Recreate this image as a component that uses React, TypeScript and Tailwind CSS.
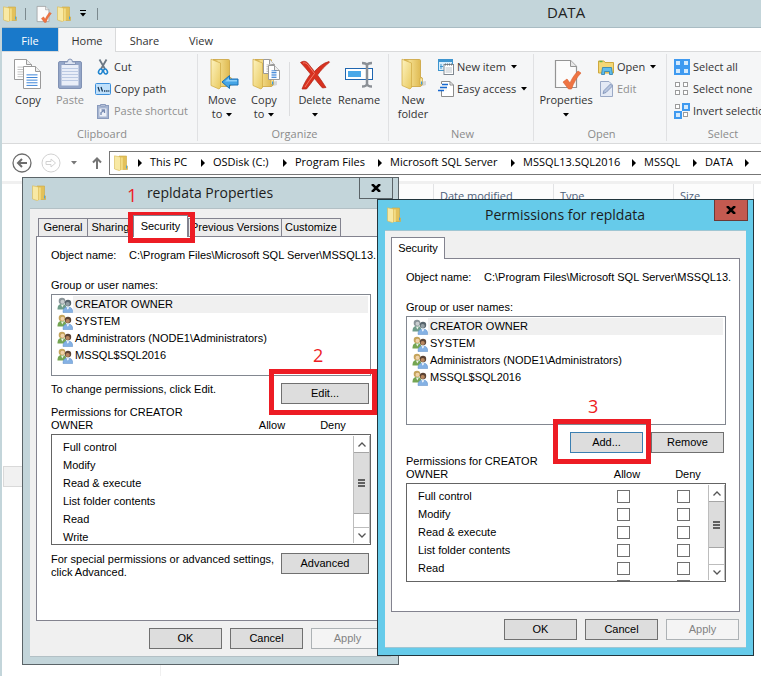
import type { ReactNode } from "react";

const UI = "font-['Open_Sans','Noto_Sans',sans-serif]";
const CLASSIC = "font-['Liberation_Sans',Arial,sans-serif]";

/* ---------- icons ---------- */

function Folder({ className = "h-8 w-8" }: { className?: string }) {
  return (
    <svg viewBox="0 0 32 32" className={className} aria-hidden="true">
      <defs>
        <linearGradient id="folderFront" x1="0" y1="0" x2="1" y2="1">
          <stop offset="0" stopColor="#fdf3c0" />
          <stop offset="1" stopColor="#e9c95e" />
        </linearGradient>
        <linearGradient id="folderBack" x1="0" y1="0" x2="1" y2="0">
          <stop offset="0" stopColor="#c99f35" />
          <stop offset="0.3" stopColor="#f4de8e" />
          <stop offset="1" stopColor="#dcb54a" />
        </linearGradient>
      </defs>
      <path d="M22 29l7-2v-4l-6 1z" fill="#9a9a9a" opacity=".35" />
      <path d="M7 1.500h15.500a1 1 0 0 1 1 1V19l1.500 1v7l-1.500 1.500H13z" fill="url(#folderBack)" stroke="#caa23c" strokeWidth=".8" />
      <path d="M5 1.200L14.500 5v24.500L13 31 5 27.500z" fill="url(#folderFront)" stroke="#d3ae4a" strokeWidth=".8" />
      <path d="M23 20h2.500v6.500H23z" fill="#f7e7a6" stroke="#c9a33c" strokeWidth=".6" />
      <path d="M24 23.500h1.200v3H24z" fill="#3b9be0" />
    </svg>
  );
}

function SmallFolder({ className = "h-4 w-4" }: { className?: string }) {
  return (
    <svg viewBox="0 0 16 16" className={className} aria-hidden="true">
      <path d="M6 1h7.500v9.500l1 .5v3.500H6z" fill="#e3c15a" stroke="#cfa740" strokeWidth=".6" />
      <path d="M1.500.8L7.500 2v13l-.8.7-5.200-1.700z" fill="#f8e9a4" stroke="#d9b954" strokeWidth=".6" />
      <path d="M7.800 2.500h2v12.500h-2z" fill="#f3dc85" />
      <path d="M13 10.500h1v3h-1z" fill="#4ba3dd" />
    </svg>
  );
}

function Page({ x, y, w, h, lines }: { x: number; y: number; w: number; h: number; lines?: string }) {
  const rows = [0.38, 0.5, 0.62, 0.74, 0.86];
  return (
    <g>
      <path d={`M${x} ${y}h${w - 5}l5 5v${h - 5}h${-w}z`} fill="#fff" stroke="#9a9a9a" />
      <path d={`M${x + w - 5} ${y}v5h5`} fill="#eee" stroke="#9a9a9a" />
      {lines && rows.map((r) => <path key={r} d={`M${x + 3} ${y + h * r}h${w - 6}`} stroke={lines} />)}
    </g>
  );
}

function CopyIcon() {
  return (
    <svg viewBox="0 0 32 32" className="h-8 w-8" aria-hidden="true">
      <Page x={2.5} y={1.5} w={17} h={20} lines="#c4c4c4" />
      <Page x={11.5} y={8.5} w={17} h={22} lines="#3f86d8" />
    </svg>
  );
}

function PasteIcon() {
  return (
    <svg viewBox="0 0 32 32" className="h-8 w-8" aria-hidden="true">
      <rect x="4.500" y="3.500" width="23" height="27" rx="1.500" fill="#94a6c8" stroke="#8192b4" />
      <rect x="7.500" y="7" width="17" height="20.500" fill="#e9eef8" />
      <path d="M7.500 10.500h17M7.500 13.500h17M7.500 16.500h17M7.500 19.500h17M7.500 22.500h17" stroke="#bccae3" />
      <path d="M10.500 6.500V4h3q0-3 2.500-3t2.500 3h3v2.500z" fill="#dde4f1" stroke="#8797b8" />
    </svg>
  );
}

function CutIcon() {
  return (
    <svg viewBox="0 0 16 16" className="h-4 w-4" fill="none" aria-hidden="true">
      <path d="M4.500 0.500L10 10M11.500 0.500L6 10" stroke="#6b7885" strokeWidth="1.800" />
      <ellipse cx="5.500" cy="12.500" rx="1.800" ry="2.500" stroke="#1e84cf" strokeWidth="1.600" transform="rotate(25 5.500 12.500)" />
      <ellipse cx="10.500" cy="12.500" rx="1.800" ry="2.500" stroke="#1e84cf" strokeWidth="1.600" transform="rotate(-25 10.500 12.500)" />
    </svg>
  );
}

function CopyPathIcon() {
  return (
    <svg viewBox="0 0 16 16" className="h-4 w-4" aria-hidden="true">
      <rect x=".5" y="2.500" width="15" height="11" rx="1" fill="#bfe0fb" stroke="#3c8fdc" />
      <path d="M3 6l1.500 4.500M6 6l1.500 4.500" stroke="#12304f" strokeWidth="1.200" />
      <path d="M9 10h1.300M11.200 10h1.300M13.300 10h1" stroke="#12304f" strokeWidth="1.300" />
    </svg>
  );
}

function PasteShortcutIcon() {
  return (
    <svg viewBox="0 0 16 16" className="h-4 w-4" aria-hidden="true">
      <rect x="2.500" y="2.500" width="11" height="13" fill="#a6b5d1" stroke="#8a9bbd" />
      <path d="M5.500 3V1.500h5V3z" fill="#dfe6f2" stroke="#8a9bbd" />
      <rect x="4.500" y="5.500" width="7" height="8" fill="#eef2f9" />
      <path d="M6 12V9.500l3-2M6.500 7h3v3" fill="none" stroke="#7589b1" strokeWidth="1.300" />
    </svg>
  );
}

function MoveIcon() {
  return (
    <div className="relative h-8 w-8">
      <Folder />
      <svg viewBox="0 0 18 16" className="absolute right-[-1px] bottom-0 h-4 w-[18px]" aria-hidden="true">
        <path d="M1 8l7.500-6.500V5H17v6H8.500v3.500z" fill="#45a5e6" stroke="#1c71b5" />
        <path d="M4 7.500l4-3.500v2h8v1.500z" fill="#8fd0f7" />
      </svg>
    </div>
  );
}

function CopyToIcon() {
  return (
    <div className="relative h-8 w-8">
      <Folder />
      <svg viewBox="0 0 20 24" className="absolute top-0 right-[-1px] h-6 w-5" aria-hidden="true">
        <Page x={2.5} y={1.5} w={11} h={14} lines="#c4c4c4" />
        <Page x={7.5} y={7.5} w={11} h={14} lines="#4b8edb" />
      </svg>
    </div>
  );
}

function DeleteIcon() {
  return (
    <svg viewBox="0 0 32 32" className="h-8 w-8" aria-hidden="true">
      <path d="M1.500 4.500c3-2 6-1.500 8 1.500l6 7.500C19.500 9 24 5 30 3.500l.5.800C26 8 22 12 18.500 17c3 4 5.500 8 8.500 12.500l-3.500.5C20.500 27 18 23.500 15.500 20.500 12.500 24.500 10 28 7.500 31H3c2-5.500 5-10.500 8.500-15C8 12 5 8 1.500 4.500z" fill="#d8311f" stroke="#b02214" strokeWidth=".7" />
      <path d="M4 5c2-.8 4 .5 5.500 2.500l6 8C12 20 9 24.500 6 29" fill="none" stroke="#f1806f" strokeWidth=".9" />
    </svg>
  );
}

function RenameIcon() {
  return (
    <svg viewBox="0 0 32 32" className="h-8 w-8" fill="none" aria-hidden="true">
      <rect x="2.500" y="10.500" width="27" height="11" fill="#fff" stroke="#1f66b0" />
      <rect x="5" y="13" width="13" height="6" fill="#4aa8e8" />
      <path d="M19 5c3 0 4.500.5 5 2.500.500-2 2-2.500 5-2.500M24 7v19M19 28.500c3 0 4.500-.5 5-2.500.500 2 2 2.500 5 2.500" stroke="#8b9096" strokeWidth="2.500" />
    </svg>
  );
}

function NewItemIcon() {
  return (
    <svg viewBox="0 0 16 16" className="h-4 w-4" aria-hidden="true">
      <rect x=".5" y=".5" width="14" height="11" fill="#d9effd" stroke="#3e95cf" />
      <path d="M1 2h13" stroke="#3e95cf" strokeWidth="2" />
      <path d="M3 5v5M2 7.500h3" stroke="#3e95cf" />
      <rect x="6" y="5.500" width="9.500" height="10" fill="#fff" stroke="#808890" />
      <path d="M7 5.500h8" stroke="#707880" strokeWidth="2" strokeDasharray="1 1" />
      <path d="M7.500 9h6.500M7.500 11h6.500M7.500 13h6.500" stroke="#aab2ba" strokeWidth=".8" />
    </svg>
  );
}

function EasyAccessIcon() {
  return (
    <svg viewBox="0 0 16 16" className="h-4 w-4" aria-hidden="true">
      <path d="M3.500.5H12l3.500 3.500v11.500h-12z" fill="#fff" stroke="#8c8c8c" />
      <path d="M12 .5V4h3.500" fill="none" stroke="#8c8c8c" />
      <rect x="0" y="3" width="9" height="7" fill="#f5f6f7" />
      <path d="M4 3.500h6M2 6.500h7M0 9.500h6" stroke="#1668d0" strokeWidth="1.400" />
    </svg>
  );
}

function PropertiesIcon({ className = "h-8 w-8" }: { className?: string }) {
  return (
    <svg viewBox="0 0 32 32" className={className} aria-hidden="true">
      <path d="M5.500 2.500h15l6 6v21h-21z" fill="#fbfbfb" stroke="#949494" strokeWidth="1.200" />
      <path d="M20.500 2.500v6h6" fill="#e8e8e8" stroke="#949494" />
      <path d="M13 24l4-3 3 4c2-5 5-9 8-12l3 2c-4 4-7.500 10-9.500 16h-3z" fill="#ee7443" stroke="#d85c2c" strokeWidth=".6" />
    </svg>
  );
}

function OpenIcon() {
  return (
    <svg viewBox="0 0 16 16" className="h-4 w-4" aria-hidden="true">
      <path d="M.5 2h5.500l1 1.500h8.500V14H.5z" fill="#f3d775" stroke="#cfa93f" />
      <path d="M1.500 2.500h3" stroke="#5fb446" strokeWidth="1.400" />
      <path d="M3.500 15.500L4.500 8.500h9l1 7h-3v-3h-5v3z" fill="#5fbcec" stroke="#277fb4" strokeWidth=".8" />
    </svg>
  );
}

function EditIcon() {
  return (
    <svg viewBox="0 0 16 16" className="h-4 w-4" aria-hidden="true">
      <path d="M2.500.5h8.500l3.500 3.500v11.500h-12z" fill="#e4eaf5" stroke="#9aa9c6" />
      <path d="M5 12.500l1-3L12.500 3l2 2L8 11.500z" fill="#b6c4de" stroke="#8093b8" strokeWidth=".9" />
    </svg>
  );
}

function SelectIcon({ cells }: { cells: boolean[] }) {
  return (
    <svg viewBox="0 0 16 16" className="h-4 w-4" aria-hidden="true">
      {cells.map((on, i) => {
        const x = (i % 2) * 8;
        const y = Math.floor(i / 2) * 8;
        return on ? (
          <g key={i}>
            <rect x={x} y={y} width="8" height="8" fill="#3f9af0" />
            <rect x={x + 2} y={y + 2} width="4" height="4" fill="#d4eafd" />
          </g>
        ) : (
          <rect key={i} x={x + 1.5} y={y + 1.5} width="4" height="4" fill="#fff" stroke="#9b9b9b" />
        );
      })}
    </svg>
  );
}

function UsersIcon({ muted }: { muted?: boolean }) {
  return (
    <svg viewBox="0 0 16 16" className="h-4 w-4 shrink-0" aria-hidden="true">
      <path d="M.5 12.500c0-4 1.500-5.500 4.500-5.500s4.500 1.500 4.500 5.500z" fill={muted ? "#6f9d8a" : "#74a552"} />
      <path d="M4 7.500l1.300 3L7 7.500z" fill="#eef2ea" />
      <circle cx="5" cy="4" r="3.300" fill={muted ? "#8a9499" : "#c5a45c"} />
      <circle cx="5.500" cy="4.700" r="2" fill={muted ? "#c9ced0" : "#f0d3ab"} />
      <path d="M6 15.500c0-4 1.500-5.500 4.800-5.500s4.900 1.500 4.900 5.500z" fill="#84b1e4" stroke="#5b8cc7" strokeWidth=".5" />
      <path d="M9.500 10.200l1.300 2.600 1.500-2.600z" fill="#fff" />
      <circle cx="11" cy="6" r="3.200" fill={muted ? "#56646c" : "#5b4334"} />
      <circle cx="10.700" cy="7" r="2.100" fill={muted ? "#94a0a5" : "#b98860"} />
    </svg>
  );
}

function Caret({ className = "" }: { className?: string }) {
  return (
    <svg viewBox="0 0 6 4" className={`inline-block h-1 w-1.5 align-middle ${className}`} aria-hidden="true">
      <path d="M0 0h6L3 3.500z" fill="currentColor" />
    </svg>
  );
}

/* ---------- explorer ribbon ---------- */

function BigButton({ icon, top, bottom, caret, width = "w-[42px]", muted }: { icon: ReactNode; top: string; bottom?: string; caret?: boolean; width?: string; muted?: boolean }) {
  return (
    <button className={`flex flex-col items-center pt-1.5 ${width} ${muted ? "text-[#8f8f8f]" : "text-[#333]"}`}>
      {icon}
      <span className="mt-[3px] text-center leading-[14px] whitespace-nowrap">
        {top}
        <br />
        {bottom}
        {caret && <Caret className={bottom ? "ml-1 text-black" : "text-black"} />}
      </span>
    </button>
  );
}

function SmallButton({ icon, label, caret, muted }: { icon: ReactNode; label: string; caret?: boolean; muted?: boolean }) {
  return (
    <button className={`flex h-[22px] items-center gap-[3px] whitespace-nowrap ${muted ? "text-[#8f8f8f]" : "text-[#333]"}`}>
      {icon}
      <span>{label}</span>
      {caret && <Caret className="ml-0.5 text-black" />}
    </button>
  );
}

function Group({ label, width, children }: { label: string; width: string; children: ReactNode }) {
  return (
    <section aria-label={label} className={`flex shrink-0 flex-col ${width}`}>
      <div className="flex h-[74px]">{children}</div>
      <div className="text-center leading-4 text-[#8b8b8b]">{label}</div>
    </section>
  );
}

const Sep = () => <div className="my-0.5 w-px shrink-0 bg-[#e0e1e3]" />;

function Ribbon() {
  return (
    <div className="flex h-[93px] overflow-hidden border-y border-[#d9dadb] bg-[#f5f6f7] text-[11px]">
      <Group label="Clipboard" width="w-[195px] pl-[5px]">
        <BigButton icon={<CopyIcon />} top="Copy" />
        <BigButton icon={<PasteIcon />} top="Paste" muted />
        <div className="pt-1 pl-1">
          <SmallButton icon={<CutIcon />} label="Cut" />
          <SmallButton icon={<CopyPathIcon />} label="Copy path" />
          <SmallButton icon={<PasteShortcutIcon />} label="Paste shortcut" muted />
        </div>
      </Group>
      <Sep />
      <Group label="Organize" width="w-[190px] pl-[3px]">
        <BigButton icon={<MoveIcon />} top="Move" bottom="to" caret />
        <BigButton icon={<CopyToIcon />} top="Copy" bottom="to" caret />
        <div className="mx-1 my-2.5 w-px bg-[#dcdddf]" />
        <BigButton icon={<DeleteIcon />} top="Delete" caret />
        <BigButton icon={<RenameIcon />} top="Rename" width="w-[46px]" />
      </Group>
      <Sep />
      <Group label="New" width="w-[144px] pl-[3px]">
        <BigButton icon={<Folder />} top="New" bottom="folder" />
        <div className="pt-1 pl-1">
          <SmallButton icon={<NewItemIcon />} label="New item" caret />
          <SmallButton icon={<EasyAccessIcon />} label="Easy access" caret />
        </div>
      </Group>
      <Sep />
      <Group label="Open" width="w-[132px] pl-[3px]">
        <BigButton icon={<PropertiesIcon />} top="Properties" caret width="w-[58px]" />
        <div className="pt-1 pl-[3px]">
          <SmallButton icon={<OpenIcon />} label="Open" caret />
          <SmallButton icon={<EditIcon />} label="Edit" muted />
        </div>
      </Group>
      <Sep />
      <Group label="Select" width="w-[112px]">
        <div className="pt-1 pl-[7px]">
          <SmallButton icon={<SelectIcon cells={[true, true, true, true]} />} label="Select all" />
          <SmallButton icon={<SelectIcon cells={[false, false, false, false]} />} label="Select none" />
          <SmallButton icon={<SelectIcon cells={[false, true, true, false]} />} label="Invert selection" />
        </div>
      </Group>
    </div>
  );
}

const crumbs = [
  { name: "This PC", width: "w-[63px]" },
  { name: "OSDisk (C:)", width: "w-[82px]" },
  { name: "Program Files", width: "w-[95px]" },
  { name: "Microsoft SQL Server", width: "w-[133px]" },
  { name: "MSSQL13.SQL2016", width: "w-[121px]" },
  { name: "MSSQL", width: "w-[61px]" },
  { name: "DATA", width: "w-[52px]" },
];

const Chevron = () => (
  <svg viewBox="0 0 4 8" className="h-2 w-1 shrink-0" aria-hidden="true">
    <path d="M0 0l4 4-4 4z" fill="#000" />
  </svg>
);

function AddressBar() {
  return (
    <div className="flex h-[37px] items-center pl-2.5">
      <button aria-label="Back">
        <svg viewBox="0 0 20 20" className="h-5 w-5" fill="none" stroke="#6d6d6d">
          <circle cx="10" cy="10" r="9" strokeWidth="1.300" />
          <path d="M15 10H6M10 6l-4 4 4 4" strokeWidth="2" />
        </svg>
      </button>
      <button aria-label="Forward" className="ml-[9px]">
        <svg viewBox="0 0 20 20" className="h-5 w-5" fill="none" stroke="#d2d2d2">
          <circle cx="10" cy="10" r="9" />
          <path d="M5 8.500h5V6l4.500 4-4.500 4v-2.500H5z" />
        </svg>
      </button>
      <button aria-label="Recent locations" className="ml-2.5 flex text-[#777]">
        <Caret />
      </button>
      <button aria-label="Up" className="ml-3.5">
        <svg viewBox="0 0 12 12" className="h-3 w-3" fill="none" stroke="#757575" strokeWidth="2">
          <path d="M6 12V2M2 5.500l4-4 4 4" />
        </svg>
      </button>
      <nav aria-label="Address" className="ml-1.5 flex h-6 flex-1 items-center overflow-hidden border border-r-0 border-[#777] bg-white pl-[3px] text-[11px] text-black">
        <SmallFolder className="mr-[9px] h-4 w-4" />
        <Chevron />
        {crumbs.map((c) => (
          <a key={c.name} href="#" className={`flex shrink-0 items-center justify-between pl-2 whitespace-nowrap ${c.width}`}>
            {c.name}
            <Chevron />
          </a>
        ))}
      </nav>
    </div>
  );
}

function Explorer() {
  return (
    <main className={`flex min-h-screen flex-col border-l-2 border-[#c3d5da] bg-white ${UI}`}>
      <header className="flex h-7 items-center border-b border-[#a9bcc3] bg-[#c3d5da]">
        <SmallFolder />
        <div className="ml-[7px] h-3 w-px bg-[#7b898e]" />
        <button aria-label="Properties" className="ml-2"><PropertiesIcon className="h-[18px] w-[18px]" /></button>
        <button aria-label="New folder" className="ml-1"><SmallFolder /></button>
        <button aria-label="Customize toolbar" className="ml-2 flex flex-col items-center gap-0.5">
          <span className="h-px w-1.5 bg-black" />
          <Caret />
        </button>
        <div className="ml-[11px] h-3 w-px bg-[#7b898e]" />
        <h1 className="ml-[449px] pb-0.5 text-[15px] text-[#222]">DATA</h1>
      </header>
      <div className="flex h-[23px] text-[11px] leading-[25px] text-[#333]">
        <button className="w-14 bg-[#1979ca] text-white">File</button>
        <button className="z-10 mb-[-1px] w-[58px] border-x border-[#d9dadb] bg-[#f5f6f7]">Home</button>
        <button className="w-[57px]">Share</button>
        <button className="w-14">View</button>
      </div>
      <Ribbon />
      <AddressBar />
      <div className="h-[3px] bg-[#f0f0f0]" />
      <div className="flex flex-1">
        <aside className="flex w-[159px] flex-col border-r border-[#f0f0f0] pt-[282px] pl-px">
          <div className="h-[21px] border border-[#d9d9d9] bg-[#f1f1f1]" />
        </aside>
        <div className="flex h-7 items-start bg-[#fcfcfc] pl-[272px] text-[11px] text-[#4c607a]">
          {["Date modified", "Type", "Size"].map((h, i) => (
            <div key={h} className={`h-full border-l border-[#e2e3e5] pt-1 pl-1.5 ${i === 2 ? "w-[81px] border-r" : "w-[120px]"}`}>
              {h}
            </div>
          ))}
        </div>
      </div>
    </main>
  );
}

/* ---------- dialogs ---------- */

function PushButton({ children, width = "w-[73px]", disabled, focused }: { children: ReactNode; width?: string; disabled?: boolean; focused?: boolean }) {
  const tone = disabled
    ? "border-[#adb2b5] bg-[#f4f4f4] text-[#838383]"
    : focused
      ? "border-[#3c7fb1] bg-[#dddddd] text-black"
      : "border-[#707070] bg-[#dddddd] text-black";
  return (
    <button disabled={disabled} className={`h-[21px] shrink-0 border text-center leading-[19px] ${width} ${tone}`}>
      {children}
    </button>
  );
}

const principals = ["CREATOR OWNER", "SYSTEM", "Administrators (NODE1\\Administrators)", "MSSQL$SQL2016"];

function Principals({ height }: { height: string }) {
  return (
    <ul className={`border border-[#828790] px-0.5 py-px ${height}`}>
      {principals.map((p, i) => (
        <li key={p} className="flex h-[17px] items-center pl-[3px]">
          <UsersIcon muted={i === 0} />
          <span className={`h-full flex-1 pl-0.5 leading-[17px] ${i === 0 ? "bg-[#f0f0f0]" : ""}`}>{p}</span>
        </li>
      ))}
    </ul>
  );
}

function ScrollBar({ thumb }: { thumb: string }) {
  return (
    <div className="my-px flex w-[17px] shrink-0 flex-col border-x border-[#bdbdbd] bg-white">
      <button aria-label="Scroll up" className="flex h-4 shrink-0 items-center justify-center">
        <svg viewBox="0 0 8 5" className="h-[5px] w-2" fill="none" stroke="#555" strokeWidth="1.300"><path d="M.5 4.500L4 1l3.500 3.500" /></svg>
      </button>
      <div className={`flex shrink-0 flex-col items-center justify-center gap-px border-y border-[#a6a6a6] bg-[#dcdcdc] ${thumb}`}>
        <span className="h-0.5 w-[7px] bg-[#606060]" />
        <span className="h-0.5 w-[7px] bg-[#606060]" />
        <span className="h-0.5 w-[7px] bg-[#606060]" />
      </div>
      <button aria-label="Scroll down" className="mt-auto flex h-4 shrink-0 items-center justify-center border-t border-[#bdbdbd]">
        <svg viewBox="0 0 8 5" className="h-[5px] w-2" fill="none" stroke="#555" strokeWidth="1.300"><path d="M.5.5L4 4 7.500.5" /></svg>
      </button>
    </div>
  );
}

function PermissionBox({ label }: { label: string }) {
  return <input type="checkbox" aria-label={label} className="block h-[13px] w-[13px] appearance-none border border-[#707070] bg-white" />;
}

const permissions = [
  { id: "full", name: "Full control" },
  { id: "modify", name: "Modify" },
  { id: "execute", name: "Read & execute" },
  { id: "list", name: "List folder contents" },
  { id: "read", name: "Read" },
  { id: "write", name: "Write" },
];

function PermissionList({ visible, height, thumb, boxes }: { visible: number; height: string; thumb: string; boxes?: boolean }) {
  return (
    <>
      <div className="flex items-end leading-[13px]">
        <div className="w-[150px]">Permissions for CREATOR OWNER</div>
        <div className="ml-[41px] w-[60px] text-center">Allow</div>
        <div className="w-[62px] text-center">Deny</div>
      </div>
      <div className={`mt-0.5 flex overflow-hidden border border-[#646464] ${height}`}>
        <div className="min-w-0 flex-1 pt-[3px]">
          <table className="w-full table-fixed border-collapse">
            <tbody>
              {permissions.map((p, i) => (
                <tr key={p.id} className="h-[18px]">
                  <td className="w-[210px] p-0 pl-[11px] leading-[18px]">{i < visible && p.name}</td>
                  <td className="w-[60px] p-0">{boxes && <PermissionBox label={`Allow ${p.id}`} />}</td>
                  <td className="p-0">{boxes && <PermissionBox label={`Deny ${p.id}`} />}</td>
                </tr>
              ))}
            </tbody>
          </table>
        </div>
        <ScrollBar thumb={thumb} />
      </div>
    </>
  );
}

function TitleBar({ title, tone, close }: { title: string; tone: string; close: string }) {
  return (
    <div className={`flex h-[30px] items-start pr-[5px] pl-2 ${tone}`}>
      <SmallFolder className="mt-[7px] h-4 w-4" />
      <h2 className={`flex-1 pl-3.5 text-center text-sm leading-[30px] text-[#1c1c1c] ${UI}`}>{title}</h2>
      <button aria-label="Close" className={`flex h-[21px] w-[34px] items-center justify-center border border-t-0 ${close}`}>
        <svg viewBox="0 0 10 8" className="h-2 w-2.5" stroke="#000" strokeWidth="2.500"><path d="M1 0l8 8M9 0L1 8" /></svg>
      </button>
    </div>
  );
}

function ObjectName() {
  return (
    <div className="flex leading-[13px] whitespace-nowrap">
      <span className="w-[78px] shrink-0">Object name:</span>
      <span>C:\Program Files\Microsoft SQL Server\MSSQL13.</span>
    </div>
  );
}

function Footer() {
  return (
    <div className="mt-[7px] flex justify-end gap-2 pr-px">
      <PushButton>OK</PushButton>
      <PushButton>Cancel</PushButton>
      <PushButton disabled>Apply</PushButton>
    </div>
  );
}

const dialogTabs = [
  { name: "General", width: "w-[50px]" },
  { name: "Sharing", width: "w-[47px]" },
  { name: "Security", width: "w-[55px]" },
  { name: "Previous Versions", width: "w-[94px]" },
  { name: "Customize", width: "w-[60px]" },
];

function PropertiesDialog() {
  return (
    <section role="dialog" aria-label="repldata Properties" className={`absolute top-[177px] left-[22px] w-[377px] border border-[#5b6468] bg-[#c3d5da] text-[11px] text-black ${CLASSIC}`}>
      <TitleBar title="repldata Properties" tone="bg-[#c3d5da]" close="border-[#5b6468] bg-[#c3d5da]" />
      <div className="mx-[7px] mb-[7px] border-y border-[#b3c0c5] bg-[#f0f0f0] px-1.5 pb-[7px]">
        <div role="tablist" className="flex h-[27px] items-end pl-0.5">
          {dialogTabs.map((t) =>
            t.name === "Security" ? (
              <button key={t.name} role="tab" aria-selected="true" className={`z-10 mb-[-1px] h-[22px] border border-b-0 border-[#83838f] bg-white ${t.width}`}>{t.name}</button>
            ) : (
              <button key={t.name} role="tab" className={`-mr-px h-[18px] border border-b-0 border-[#83838f] bg-[#ececec] whitespace-nowrap ${t.width}`}>{t.name}</button>
            ),
          )}
        </div>
        <div className="border border-[#83838f] bg-white pt-3 pr-[13px] pb-[41px] pl-3.5">
          <ObjectName />
          <div className="mt-[17px] mb-0.5 leading-[13px]">Group or user names:</div>
          <Principals height="h-[82px]" />
          <div className="mt-[7px] mb-0.5 flex items-start justify-between pr-0.5">
            <span className="leading-[13px]">To change permissions, click Edit.</span>
            <PushButton width="w-[88px]">Edit...</PushButton>
          </div>
          <PermissionList visible={6} height="h-[111px]" thumb="h-[62px]" />
          <div className="mt-2 flex items-start justify-between pr-0.5">
            <p className="w-[230px] leading-[13px]">For special permissions or advanced settings, click Advanced.</p>
            <PushButton width="w-[88px]">Advanced</PushButton>
          </div>
        </div>
        <Footer />
      </div>
    </section>
  );
}

function PermissionsDialog() {
  return (
    <section role="dialog" aria-label="Permissions for repldata" className={`absolute top-[199px] left-[377px] w-[377px] border border-[#22353d] bg-[#66cbea] text-[11px] text-black ${CLASSIC}`}>
      <TitleBar title="Permissions for repldata" tone="bg-[#66cbea]" close="border-[#6c3835] bg-[#c35a50]" />
      <div className="mx-[7px] mb-[7px] border-y border-[#9fc6d3] bg-[#f0f0f0] px-1.5 pb-[7px]">
        <div role="tablist" className="flex h-[27px] items-end">
          <button role="tab" aria-selected="true" className="z-10 mb-[-1px] h-[22px] w-[54px] border border-b-0 border-[#83838f] bg-white">Security</button>
        </div>
        <div className="border border-[#83838f] bg-white pt-3 pr-[13px] pb-[29px] pl-3.5">
          <ObjectName />
          <div className="mt-[17px] mb-0.5 leading-[13px]">Group or user names:</div>
          <Principals height="h-[109px]" />
          <div className="mt-[7px] mb-0.5 flex justify-end gap-2 pr-0.5">
            <PushButton focused>Add...</PushButton>
            <PushButton>Remove</PushButton>
          </div>
          <PermissionList visible={5} height="h-[99px]" thumb="h-[47px]" boxes />
        </div>
        <Footer />
      </div>
    </section>
  );
}

export default function App() {
  return (
    <div className="relative min-h-screen overflow-hidden">
      <Explorer />
      <PropertiesDialog />
      <div className="absolute top-[212px] left-[128px] h-[31px] w-[67px] border-[5px] border-[#ed1c24]" />
      <div className="absolute top-[369px] left-[269px] h-[46px] w-[108px] border-[5px] border-[#ed1c24]" />
      <PermissionsDialog />
      <div className="absolute top-[419px] left-[553px] h-[45px] w-[98px] border-[5px] border-[#ed1c24]" />
      <div className={`text-lg leading-6 text-[#ed1c24] ${UI}`}>
        <span className="absolute top-[183px] left-[127px]">1</span>
        <span className="absolute top-[343px] left-[313px]">2</span>
        <span className="absolute top-[394px] left-[588px]">3</span>
      </div>
    </div>
  );
}
